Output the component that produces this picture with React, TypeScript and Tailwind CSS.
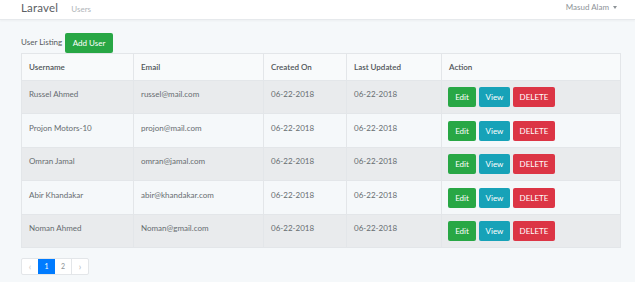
import React from 'react'

interface UserRow {
  name: string
  email: string
  created: string
  updated: string
}

const users: UserRow[] = [
  { name: 'Russel Ahmed', email: 'russel@mail.com', created: '06-22-2018', updated: '06-22-2018' },
  { name: 'Projon Motors-10', email: 'projon@mail.com', created: '06-22-2018', updated: '06-22-2018' },
  { name: 'Omran Jamal', email: 'omran@jamal.com', created: '06-22-2018', updated: '06-22-2018' },
  { name: 'Abir Khandakar', email: 'abir@khandakar.com', created: '06-22-2018', updated: '06-22-2018' },
  { name: 'Noman Ahmed', email: 'Noman@gmail.com', created: '06-22-2018', updated: '06-22-2018' },
]

const rowHeights = ['h-[33px]', 'h-[34px]', 'h-[33px]', 'h-[34px]', 'h-[33px]']

const App: React.FC = () => {
  return (
    <div
      className="h-[282px] w-[635px] overflow-hidden bg-[#f5f8fa] text-[#636b6f]"
      style={{ fontFamily: 'Lato, "Open Sans", sans-serif' }}
    >
      {/* Navbar */}
      <nav className="flex h-[20px] items-start justify-between border-b border-[#e6e9ec] bg-white pl-[21px] pr-[18px] shadow-[0_1px_2px_rgba(0,0,0,0.04)]">
        <div className="flex items-baseline">
          <span className="mt-[-1px] text-[11.5px] tracking-[0.2px] text-[#5b6064]">Laravel</span>
          <span className="ml-[13px] text-[8px] text-[#b0b5b9]">Users</span>
        </div>
        <div className="mt-[1px] flex items-center text-[8px] text-[#8d9397]">
          Masud Alam
          <span className="ml-[4px] inline-block h-0 w-0 border-x-[2.5px] border-t-[3px] border-x-transparent border-t-[#8d9397]" />
        </div>
      </nav>

      <div className="px-[21px] pt-[13px]">
        {/* Heading */}
        <div className="flex items-end">
          <span className="mb-[5px] text-[8px] text-[#555a5e]">User Listing</span>
          <button className="ml-[3px] h-[20px] rounded-[2px] bg-[#28a745] px-[7.5px] text-[8px] text-white">
            Add User
          </button>
        </div>

        {/* Table */}
        <table className="w-[599px] table-fixed border-collapse text-[8px] text-[#666c70]">
          <colgroup>
            <col className="w-[112px]" />
            <col className="w-[130px]" />
            <col className="w-[83px]" />
            <col className="w-[95px]" />
            <col className="w-[179px]" />
          </colgroup>
          <thead>
            <tr className="h-[27px] bg-[#f8fafb]">
              {['Username', 'Email', 'Created On', 'Last Updated', 'Action'].map((h) => (
                <th
                  key={h}
                  className="border border-[#e3e6e9] px-[7px] text-left font-semibold text-[#4f5458]"
                >
                  {h}
                </th>
              ))}
            </tr>
          </thead>
          <tbody>
            {users.map((u, i) => (
              <tr
                key={u.email}
                className={`${rowHeights[i]} ${i % 2 === 0 ? 'bg-[#e9ebed]' : 'bg-[#f5f8fa]'}`}
              >
                <td className="border border-[#e3e6e9] px-[7px] pb-[6px]">{u.name}</td>
                <td className="border border-[#e3e6e9] px-[7px] pb-[6px]">{u.email}</td>
                <td className="border border-[#e3e6e9] px-[7px] pb-[6px]">{u.created}</td>
                <td className="border border-[#e3e6e9] px-[7px] pb-[6px]">{u.updated}</td>
                <td className="border border-[#e3e6e9] px-[6px]">
                  <div className="flex gap-[3px]">
                    <button className="h-[20px] w-[28px] rounded-[2px] bg-[#28a745] text-[8px] text-white">
                      Edit
                    </button>
                    <button className="h-[20px] w-[31px] rounded-[2px] bg-[#17a2b8] text-[8px] text-white">
                      View
                    </button>
                    <button className="h-[20px] w-[42px] rounded-[2px] bg-[#dc3545] text-[8px] text-white">
                      DELETE
                    </button>
                  </div>
                </td>
              </tr>
            ))}
          </tbody>
        </table>

        {/* Pagination */}
        <div className="mt-[10px] flex h-[17px] w-fit rounded-[2px] border border-[#e3e6e9] bg-white text-[7px] text-[#8d9397]">
          <span className="flex w-[16px] items-center justify-center text-[9px] text-[#c3c7ca]">‹</span>
          <span className="flex w-[17px] items-center justify-center bg-[#007bff] text-white">1</span>
          <span className="flex w-[17px] items-center justify-center border-r border-[#e3e6e9]">2</span>
          <span className="flex w-[16px] items-center justify-center text-[9px] text-[#b0b5b9]">›</span>
        </div>
      </div>
    </div>
  )
}

export default App
